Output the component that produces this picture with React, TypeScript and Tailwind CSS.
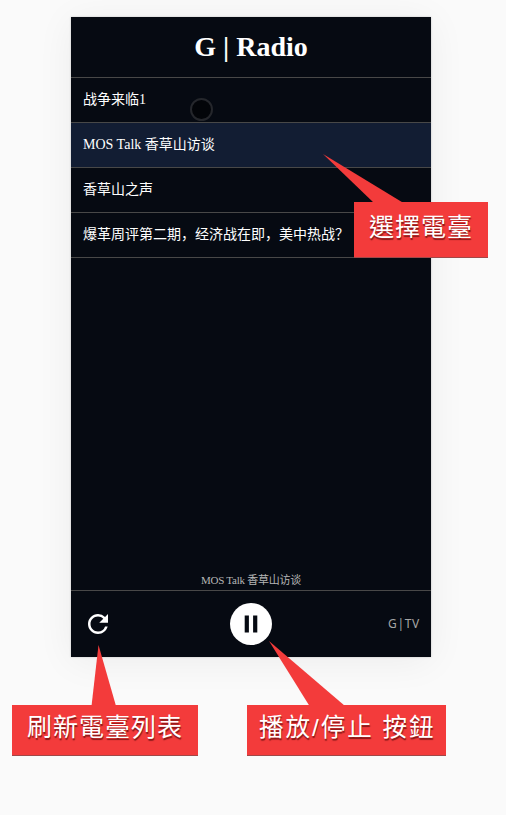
const stations = [
  { name: '战争来临1', active: false },
  { name: 'MOS Talk 香草山访谈', active: true },
  { name: '香草山之声', active: false },
  { name: '爆革周评第二期，经济战在即，美中热战？', active: false },
];

function RefreshIcon() {
  return (
    <svg viewBox="0 0 24 24" className="size-[30px]" fill="currentColor">
      <path d="M17.65 6.35A7.958 7.958 0 0 0 12 4c-4.42 0-7.99 3.58-7.99 8s3.57 8 7.99 8c3.73 0 6.84-2.55 7.73-6h-2.08A5.99 5.99 0 0 1 12 18c-3.31 0-6-2.69-6-6s2.69-6 6-6c1.66 0 3.14.69 4.22 1.78L13 11h7V4l-2.35 2.35z" />
    </svg>
  );
}

function PauseIcon() {
  return (
    <svg viewBox="0 0 42 42" className="size-[42px]">
      <circle cx="21" cy="21" r="21" fill="#fff" />
      <path d="M14.7 12.6h4.2v16.8h-4.2zM23.1 12.6h4.2v16.8h-4.2z" fill="#060a12" />
    </svg>
  );
}

function Callout({ className, text, textClass }: { className: string; text: string; textClass: string }) {
  return (
    <div
      className={`absolute flex whitespace-nowrap border-b border-[#a04848] bg-[#f33b3b] font-['Liberation_Sans','Noto_Sans_CJK_TC',sans-serif] text-white [text-shadow:0.5px_1.5px_1px_rgba(60,0,0,0.6)] ${className}`}
    >
      <span className={textClass}>{text}</span>
    </div>
  );
}

export default function App() {
  return (
    <div className="relative h-[815px] w-[506px] overflow-hidden bg-[#fafafa] pt-[17px] pl-[71px] font-['Liberation_Serif','Noto_Sans_CJK_SC',serif]">
      <main className="flex h-[640px] w-[360px] flex-col bg-[#060a12] text-white shadow-[0_0_2px_rgba(0,0,0,0.2),0_4px_36px_rgba(0,0,0,0.06)]">
        <header className="flex h-[61px] shrink-0 items-center justify-center border-b border-[#484848]">
          <h1 className="text-[28px] leading-8 font-bold">G | Radio</h1>
        </header>
        <ul className="flex-1">
          {stations.map((s) => (
            <li
              key={s.name}
              className={`flex h-[45px] items-center border-b border-[#484848] pl-3 text-[14px] leading-5 whitespace-nowrap ${s.active ? 'bg-[#121d33]' : ''}`}
            >
              {s.name}
            </li>
          ))}
        </ul>
        <p className="pb-px text-center text-[11px] leading-[18px] tracking-[-0.25px] text-[#b5b5b5]">MOS Talk 香草山访谈</p>
        <footer className="grid h-[67px] shrink-0 grid-cols-3 items-center border-t border-[#484848] pr-[11px] pl-3">
          <button className="justify-self-start"><RefreshIcon /></button>
          <button className="justify-self-center pr-px"><PauseIcon /></button>
          <span className="justify-self-end pb-px font-['Noto_Sans',sans-serif] text-[12px] tracking-[0.7px] text-[#a5a5a5]">G|TV</span>
        </footer>
      </main>
      <div className="absolute top-[98px] left-[190px] size-[23px] rounded-full border-2 border-[#25272c] bg-[#030509]" />
      <svg viewBox="0 0 506 815" className="absolute inset-0 h-[815px] w-[506px]" fill="#f33b3b">
        <path d="M323 154 403.500 203H374z" />
        <path d="M98.500 645 116 706H91.500z" />
        <path d="M269 641 345 706H309.500z" />
      </svg>
      <Callout className="top-[202px] left-[354px] h-14 w-[134px] pl-[15px] text-[25px] leading-[51px]" textClass="tracking-[1px]" text="選擇電臺" />
      <Callout className="top-[705px] left-3 h-[51px] w-[186px] pl-[15px] text-[25px] leading-[45px]" textClass="tracking-[1px]" text="刷新電臺列表" />
      <Callout className="top-[705px] left-[247px] h-[51px] w-[199px] pl-3 text-[24.5px] leading-[45px]" textClass="tracking-[2px]" text="播放/停止 按鈕" />
    </div>
  );
}
